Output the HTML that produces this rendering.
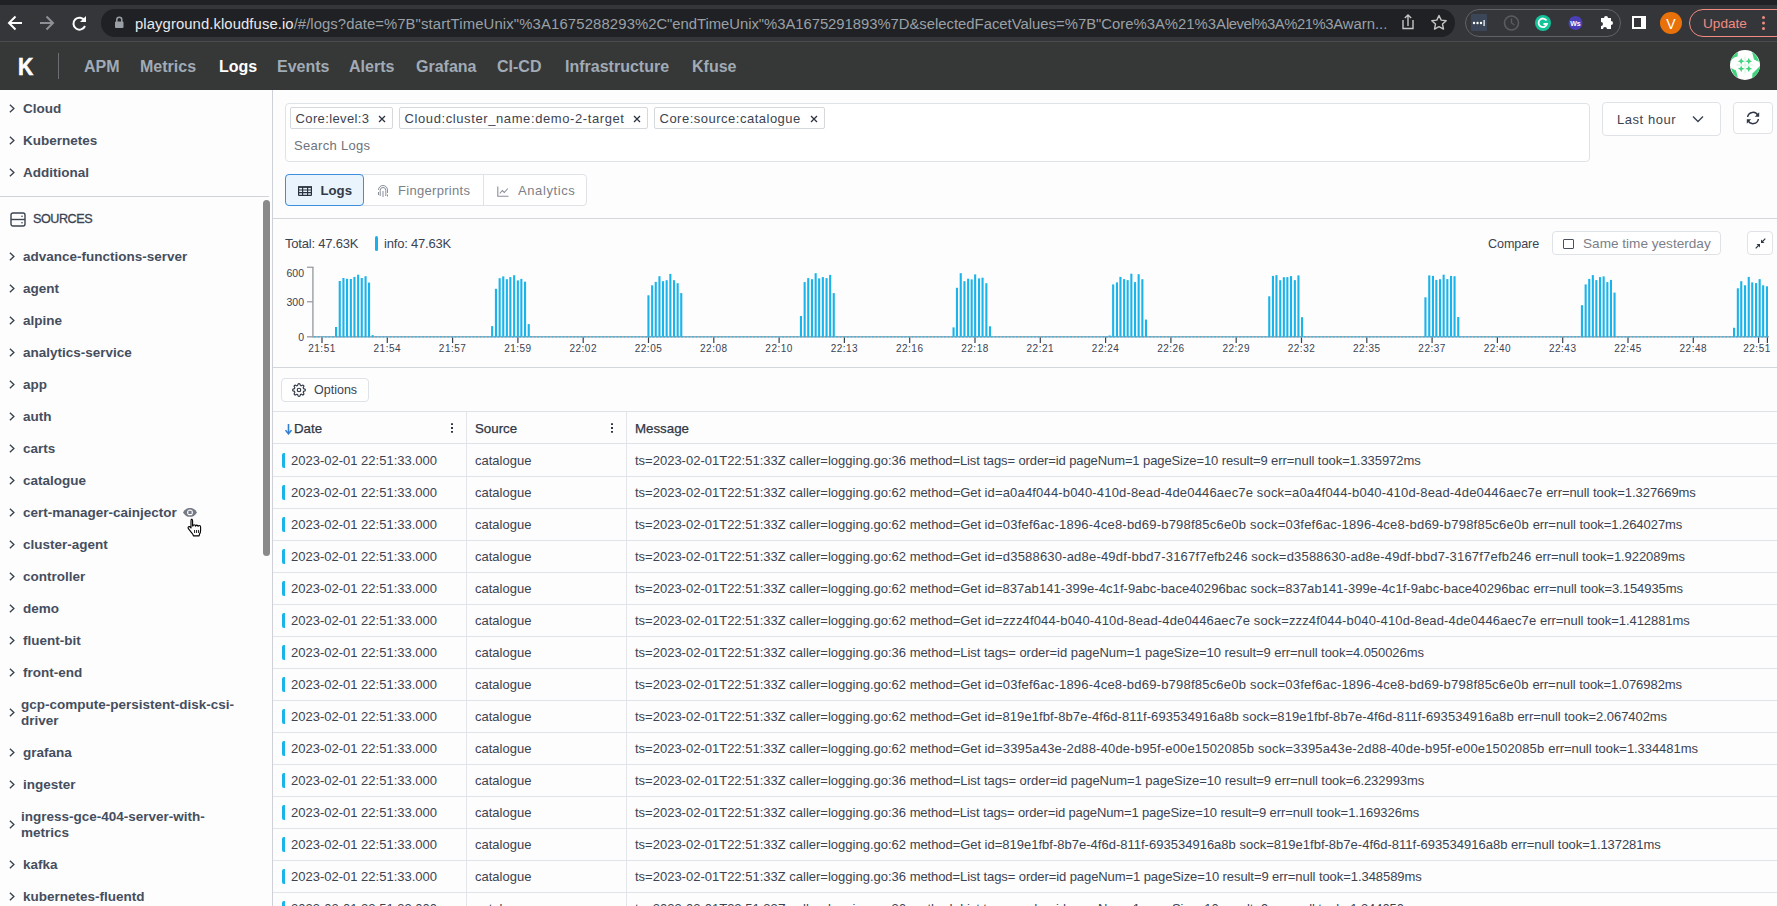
<!DOCTYPE html>
<html><head><meta charset="utf-8">
<style>
*{box-sizing:border-box;margin:0;padding:0}
html,body{width:1777px;height:906px;overflow:hidden;background:#fff;font-family:"Liberation Sans",sans-serif;color:#3c4350}
.abs{position:absolute}
#tabstrip{position:absolute;left:0;top:0;width:1777px;height:5px;background:#202124}
#toolbar{position:absolute;left:0;top:5px;width:1777px;height:36px;background:#35363a}
#tbline{position:absolute;left:0;top:41px;width:1777px;height:1px;background:#4b4c50}
#omni{position:absolute;left:101px;top:9px;width:1354px;height:28px;border-radius:14px;background:#202124}
#url{position:absolute;left:135px;top:15px;width:1254px;overflow:hidden;font-size:14.85px;color:#9aa0a6;white-space:nowrap;line-height:18px}
#url b{color:#e8eaed;font-weight:normal}
#nav{position:absolute;left:0;top:42px;width:1777px;height:48px;background:#363737}
.nv{position:absolute;top:58px;font-size:16px;font-weight:bold;color:#a1abb6;line-height:18px;white-space:nowrap}
#side{position:absolute;left:0;top:90px;width:273px;height:816px;background:#fdfdfd;border-right:1px solid #cdd0d6}
.si{position:absolute;left:23px;font-size:13.5px;font-weight:bold;color:#454e5e;white-space:nowrap;line-height:16px}
.chev{position:absolute;left:9px;width:6px;height:9px}
#main{position:absolute;left:273px;top:90px;width:1504px;height:816px;background:#fdfdfe}
.chip{position:absolute;height:22px;border:1px solid #d5d9de;border-radius:2px;background:#fff}
.chip .cx{position:absolute;right:6px;top:6.5px}
.chip span{position:absolute;left:4.5px;top:3px;font-size:13px;color:#3b4351;line-height:15px;white-space:nowrap;letter-spacing:.38px}
.th{position:absolute;top:10px;font-size:13.3px;color:#2f3744;line-height:15px;-webkit-text-stroke:.25px #2f3744}
.kb{position:absolute;top:12px;width:3px;height:10px;background:linear-gradient(#2f3744 0,#2f3744 2px,transparent 2px,transparent 4px,#2f3744 4px,#2f3744 6px,transparent 6px,transparent 8px,#2f3744 8px,#2f3744 10px);border-radius:1px;width:2.2px}
.row{position:absolute;left:0;width:1504px;height:32px;border-bottom:1px solid #e1e4e8}
.row i{position:absolute;left:9px;top:8px;width:3px;height:15px;border-radius:2px 0 0 2px;background:#1ab4ea}
.row span{position:absolute;top:8px;font-size:13px;line-height:15px;color:#3b4351;white-space:nowrap}
.row b{font-weight:normal}.row .p{letter-spacing:0}.row .u{letter-spacing:.175px}.row .l{letter-spacing:-.09px}
.row .d{left:18px}.row .s{left:202px}.row .m{left:362px;letter-spacing:-.06px}
</style></head><body>
<div id="tabstrip"></div>
<div id="toolbar"></div>
<div id="tbline"></div>
<div id="omni"></div>
<div id="url"><b style="letter-spacing:.08px">playground.kloudfuse.io</b><span style="letter-spacing:.065px">/#/logs?date=%7B"</span><span style="letter-spacing:.146px">startTimeUnix"%3A1675288293</span><span style="letter-spacing:-.04px">%2C"endTimeUnix"%3A1675291893%7D&amp;</span><span>selectedFacetValues=%7B"Core%3A%21%3A</span><span style="letter-spacing:-.45px">level%3A%21%3</span>Awarn...</div>
<svg class="abs" style="left:0;top:5px" width="140" height="36" viewBox="0 5 140 36">
<g fill="none" stroke-width="2" stroke-linecap="butt">
<path d="M22 23H9M15.5 16.5L9 23l6.5 6.5" stroke="#fff"/>
<path d="M40 23h13M46.5 16.5L53 23l-6.5 6.5" stroke="#8d9096"/>
<path d="M84.6 20.5A6 6 0 1 0 85 26" stroke="#fff"/>
</g>
<path d="M86 16v6h-6z" fill="#fff"/>
<rect x="115" y="21.5" width="8.5" height="6.5" rx="1" fill="#9aa0a6"/>
<path d="M116.8 22v-2.2a2.5 2.5 0 0 1 5 0V22" fill="none" stroke="#9aa0a6" stroke-width="1.5"/>
</svg>
<svg class="abs" style="left:1390px;top:5px" width="387" height="36" viewBox="1390 5 387 36">
<g fill="none" stroke="#c4c7c5" stroke-width="1.4">
<path d="M1403 20v8.5h10V20M1408 26V15M1404.8 18l3.2-3 3.2 3"/>
<path d="M1439 15.5l2.2 4.6 5 .6-3.7 3.4 1 5-4.5-2.5-4.5 2.5 1-5-3.7-3.4 5-.6z" stroke-linejoin="round"/>
</g>
<rect x="1465.5" y="9.5" width="155" height="27" rx="13.5" fill="none" stroke="#5f6368"/>
<rect x="1471" y="14" width="16" height="17" rx="1" fill="#3b4759"/>
<g fill="#fff"><circle cx="1474" cy="23" r="1.2"/><circle cx="1477.5" cy="23" r="1.2"/><circle cx="1481" cy="23" r="1.2"/><rect x="1483.5" y="20" width="1.2" height="6"/></g>
<circle cx="1511.5" cy="23" r="7" fill="none" stroke="#5a5c60" stroke-width="1.6"/>
<path d="M1511.5 18.5v4.5l3 2" fill="none" stroke="#5a5c60" stroke-width="1.4"/>
<circle cx="1543" cy="23" r="8" fill="#15c39a"/>
<path d="M1546.5 20.5a4.3 4.3 0 1 0 .5 3.5h-3.5" fill="none" stroke="#fff" stroke-width="1.8"/>
<circle cx="1575.5" cy="23" r="7" fill="#4a3fb8"/>
<text x="1575.5" y="25.5" font-size="7" font-weight="bold" fill="#fff" text-anchor="middle" font-family="Liberation Sans">Ws</text>
<path d="M1601 18h3a2 2 0 0 1 4 0h3v3a2 2 0 0 1 0 4v4h-4a2 2 0 0 0-4 0h-2v-3a2 2 0 0 0 0-4z" fill="#fff"/>
<rect x="1632" y="16" width="14" height="13" fill="#fff"/>
<rect x="1634" y="18" width="7" height="9" fill="#35363a"/>
<circle cx="1671" cy="23" r="11" fill="#e8710a"/>
<text x="1671" y="28.5" font-size="14" fill="#fff" text-anchor="middle" font-family="Liberation Sans">V</text>
<rect x="1689.5" y="9.5" width="100" height="27" rx="13.5" fill="none" stroke="#f28b82"/>
<text x="1703" y="28" font-size="13.6" fill="#f28b82" font-family="Liberation Sans">Update</text>
<g fill="#f28b82"><circle cx="1763.5" cy="17.5" r="1.5"/><circle cx="1763.5" cy="23" r="1.5"/><circle cx="1763.5" cy="28.5" r="1.5"/></g>
</svg>
<div id="nav"></div>
<div class="abs" style="left:18px;top:53.5px;font-size:23.5px;font-weight:bold;color:#fff;line-height:26px;-webkit-text-stroke:.6px #fff;transform:scaleX(.9);transform-origin:0 0">K</div>
<div class="abs" style="left:58px;top:53px;width:1px;height:26px;background:#6b6e72"></div>
<div class="nv" style="left:84px">APM</div>
<div class="nv" style="left:140px">Metrics</div>
<div class="nv" style="left:219px;color:#fff">Logs</div>
<div class="nv" style="left:277px">Events</div>
<div class="nv" style="left:349px">Alerts</div>
<div class="nv" style="left:416px">Grafana</div>
<div class="nv" style="left:497px">CI-CD</div>
<div class="nv" style="left:565px">Infrastructure</div>
<div class="nv" style="left:692px">Kfuse</div>
<div id="side">
<div class="abs" style="left:0;top:106px;width:269px;height:1px;background:#d0d3d9"></div>
<svg class="abs" style="left:10px;top:122px" width="16" height="15" viewBox="0 0 16 15"><rect x="1" y="1" width="14" height="13" rx="2" fill="none" stroke="#3a4352" stroke-width="1.4"/><path d="M1 7.5h14" stroke="#3a4352" stroke-width="1.4"/><circle cx="12" cy="4.3" r=".8" fill="#3a4352"/><circle cx="12" cy="10.7" r=".8" fill="#3a4352"/></svg>
<div class="abs" style="left:33px;top:122px;font-size:12.6px;color:#3a4352;letter-spacing:-.45px;line-height:15px;-webkit-text-stroke:.3px #3a4352">SOURCES</div>
<div class="abs" style="left:263px;top:110px;width:7px;height:356px;border-radius:4px;background:#8a8a8a"></div>
<svg class="chev" style="top:13.5px" width="6" height="9" viewBox="0 0 6 9"><path d="M.9 .7l4 3.8-4 3.8" fill="none" stroke="#3a4352" stroke-width="1.35"/></svg>
<div class="si" style="top:11px">Cloud</div>
<svg class="chev" style="top:45.5px" width="6" height="9" viewBox="0 0 6 9"><path d="M.9 .7l4 3.8-4 3.8" fill="none" stroke="#3a4352" stroke-width="1.35"/></svg>
<div class="si" style="top:43px">Kubernetes</div>
<svg class="chev" style="top:77.5px" width="6" height="9" viewBox="0 0 6 9"><path d="M.9 .7l4 3.8-4 3.8" fill="none" stroke="#3a4352" stroke-width="1.35"/></svg>
<div class="si" style="top:75px">Additional</div>
<svg class="chev" style="top:161.5px" width="6" height="9" viewBox="0 0 6 9"><path d="M.9 .7l4 3.8-4 3.8" fill="none" stroke="#3a4352" stroke-width="1.35"/></svg>
<div class="si" style="top:159px">advance-functions-server</div>
<svg class="chev" style="top:193.5px" width="6" height="9" viewBox="0 0 6 9"><path d="M.9 .7l4 3.8-4 3.8" fill="none" stroke="#3a4352" stroke-width="1.35"/></svg>
<div class="si" style="top:191px">agent</div>
<svg class="chev" style="top:225.5px" width="6" height="9" viewBox="0 0 6 9"><path d="M.9 .7l4 3.8-4 3.8" fill="none" stroke="#3a4352" stroke-width="1.35"/></svg>
<div class="si" style="top:223px">alpine</div>
<svg class="chev" style="top:257.5px" width="6" height="9" viewBox="0 0 6 9"><path d="M.9 .7l4 3.8-4 3.8" fill="none" stroke="#3a4352" stroke-width="1.35"/></svg>
<div class="si" style="top:255px">analytics-service</div>
<svg class="chev" style="top:289.5px" width="6" height="9" viewBox="0 0 6 9"><path d="M.9 .7l4 3.8-4 3.8" fill="none" stroke="#3a4352" stroke-width="1.35"/></svg>
<div class="si" style="top:287px">app</div>
<svg class="chev" style="top:321.5px" width="6" height="9" viewBox="0 0 6 9"><path d="M.9 .7l4 3.8-4 3.8" fill="none" stroke="#3a4352" stroke-width="1.35"/></svg>
<div class="si" style="top:319px">auth</div>
<svg class="chev" style="top:353.5px" width="6" height="9" viewBox="0 0 6 9"><path d="M.9 .7l4 3.8-4 3.8" fill="none" stroke="#3a4352" stroke-width="1.35"/></svg>
<div class="si" style="top:351px">carts</div>
<svg class="chev" style="top:385.5px" width="6" height="9" viewBox="0 0 6 9"><path d="M.9 .7l4 3.8-4 3.8" fill="none" stroke="#3a4352" stroke-width="1.35"/></svg>
<div class="si" style="top:383px">catalogue</div>
<svg class="chev" style="top:417.5px" width="6" height="9" viewBox="0 0 6 9"><path d="M.9 .7l4 3.8-4 3.8" fill="none" stroke="#3a4352" stroke-width="1.35"/></svg>
<div class="si" style="top:415px">cert-manager-cainjector</div>
<svg class="chev" style="top:449.5px" width="6" height="9" viewBox="0 0 6 9"><path d="M.9 .7l4 3.8-4 3.8" fill="none" stroke="#3a4352" stroke-width="1.35"/></svg>
<div class="si" style="top:447px">cluster-agent</div>
<svg class="chev" style="top:481.5px" width="6" height="9" viewBox="0 0 6 9"><path d="M.9 .7l4 3.8-4 3.8" fill="none" stroke="#3a4352" stroke-width="1.35"/></svg>
<div class="si" style="top:479px">controller</div>
<svg class="chev" style="top:513.5px" width="6" height="9" viewBox="0 0 6 9"><path d="M.9 .7l4 3.8-4 3.8" fill="none" stroke="#3a4352" stroke-width="1.35"/></svg>
<div class="si" style="top:511px">demo</div>
<svg class="chev" style="top:545.5px" width="6" height="9" viewBox="0 0 6 9"><path d="M.9 .7l4 3.8-4 3.8" fill="none" stroke="#3a4352" stroke-width="1.35"/></svg>
<div class="si" style="top:543px">fluent-bit</div>
<svg class="chev" style="top:577.5px" width="6" height="9" viewBox="0 0 6 9"><path d="M.9 .7l4 3.8-4 3.8" fill="none" stroke="#3a4352" stroke-width="1.35"/></svg>
<div class="si" style="top:575px">front-end</div>
<svg class="chev" style="top:617.5px" width="6" height="9" viewBox="0 0 6 9"><path d="M.9 .7l4 3.8-4 3.8" fill="none" stroke="#3a4352" stroke-width="1.35"/></svg>
<div class="si" style="top:607px;left:21px">gcp-compute-persistent-disk-csi-<br>driver</div>
<svg class="chev" style="top:657.5px" width="6" height="9" viewBox="0 0 6 9"><path d="M.9 .7l4 3.8-4 3.8" fill="none" stroke="#3a4352" stroke-width="1.35"/></svg>
<div class="si" style="top:655px">grafana</div>
<svg class="chev" style="top:689.5px" width="6" height="9" viewBox="0 0 6 9"><path d="M.9 .7l4 3.8-4 3.8" fill="none" stroke="#3a4352" stroke-width="1.35"/></svg>
<div class="si" style="top:687px">ingester</div>
<svg class="chev" style="top:729.5px" width="6" height="9" viewBox="0 0 6 9"><path d="M.9 .7l4 3.8-4 3.8" fill="none" stroke="#3a4352" stroke-width="1.35"/></svg>
<div class="si" style="top:719px;left:21px">ingress-gce-404-server-with-<br>metrics</div>
<svg class="chev" style="top:769.5px" width="6" height="9" viewBox="0 0 6 9"><path d="M.9 .7l4 3.8-4 3.8" fill="none" stroke="#3a4352" stroke-width="1.35"/></svg>
<div class="si" style="top:767px">kafka</div>
<svg class="chev" style="top:801.5px" width="6" height="9" viewBox="0 0 6 9"><path d="M.9 .7l4 3.8-4 3.8" fill="none" stroke="#3a4352" stroke-width="1.35"/></svg>
<div class="si" style="top:799px">kubernetes-fluentd</div>
<svg class="abs" style="left:182px;top:416px" width="16" height="12" viewBox="0 0 16 12"><path d="M1 6.4C3 3.2 5.2 2 8 2s5 1.2 7 4.4c-2 3.2-4.2 4.4-7 4.4S3 9.6 1 6.4z" fill="#747a86"/><circle cx="8" cy="6.4" r="2.9" fill="#fff"/><rect x="6.4" y="4.8" width="3.2" height="3.2" fill="#747a86"/></svg>
</div>
<div id="main">
<!-- search box -->
<div class="abs" style="left:12px;top:13px;width:1305px;height:59px;border:1px solid #dfe2e6;border-radius:4px;background:#fff"></div>
<div class="chip" style="left:17px;top:17px;width:103px"><span>Core:level:3</span><svg class="cx" width="8" height="8" viewBox="0 0 8 8"><path d="M1 1l6 6M7 1L1 7" stroke="#2a3240" stroke-width="1.25"/></svg></div>
<div class="chip" style="left:126px;top:17px;width:249px"><span style="letter-spacing:.6px">Cloud:cluster_name:demo-2-target</span><svg class="cx" width="8" height="8" viewBox="0 0 8 8"><path d="M1 1l6 6M7 1L1 7" stroke="#2a3240" stroke-width="1.25"/></svg></div>
<div class="chip" style="left:381px;top:17px;width:171px"><span style="letter-spacing:.5px">Core:source:catalogue</span><svg class="cx" width="8" height="8" viewBox="0 0 8 8"><path d="M1 1l6 6M7 1L1 7" stroke="#2a3240" stroke-width="1.25"/></svg></div>
<div class="abs" style="left:21px;top:48px;font-size:13px;letter-spacing:.3px;color:#6f737b;line-height:15px">Search Logs</div>
<!-- last hour -->
<div class="abs" style="left:1329px;top:12px;width:119px;height:34px;border:1px solid #dfe2e6;border-radius:4px;background:#fff"></div>
<div class="abs" style="left:1344px;top:22px;font-size:13px;letter-spacing:.55px;color:#3b4351;line-height:15px">Last hour</div>
<svg class="abs" style="left:1419px;top:25px" width="12" height="8" viewBox="0 0 12 8"><path d="M1 1.5l5 5 5-5" fill="none" stroke="#3b4351" stroke-width="1.4"/></svg>
<div class="abs" style="left:1460px;top:12px;width:40px;height:32px;border:1px solid #dfe2e6;border-radius:4px;background:#fff"></div>
<svg class="abs" style="left:1472px;top:21px" width="16" height="14" viewBox="0 0 16 14"><g fill="none" stroke="#2f3744" stroke-width="1.5"><path d="M2.6 6A5.5 5.5 0 0 1 13 4.5"/><path d="M13.4 8A5.5 5.5 0 0 1 3 9.5"/></g><path d="M14.2 1.2v4.6H9.8z" fill="#2f3744"/><path d="M1.8 12.8V8.2h4.4z" fill="#2f3744"/></svg>
<!-- tabs -->
<div class="abs" style="left:12px;top:84px;width:302px;height:32px;border:1px solid #dfe2e6;border-radius:4px;background:#fff"></div>
<div class="abs" style="left:12px;top:84px;width:79px;height:32px;border:1.3px solid #3d8ede;border-radius:4px;background:#e9f4fc"></div>
<div class="abs" style="left:210px;top:85px;width:1px;height:30px;background:#dfe2e6"></div>
<svg class="abs" style="left:25px;top:96px" width="14" height="10" viewBox="0 0 14 10"><g fill="none" stroke="#2a3240" stroke-width="1.2"><rect x=".6" y="1" width="12.8" height="8.4" rx=".5"/><path d="M.6 4h12.8M.6 6.7h12.8M4.6 1v8.4M9.6 1v8.4"/></g><rect x="0" y=".2" width="14" height="1.6" fill="#2a3240"/></svg>
<div class="abs" style="left:47.5px;top:93px;font-size:13.2px;font-weight:bold;color:#323a47;line-height:15px">Logs</div>
<svg class="abs" style="left:104px;top:94px" width="12" height="14" viewBox="0 0 12 14"><g fill="none" stroke="#8a8f98" stroke-width="1"><path d="M1.5 6a4.5 4.5 0 0 1 9 0v3"/><path d="M3.2 12V6.3a2.8 2.8 0 0 1 5.6 0V12"/><path d="M6 7v6M1.5 8v3M10.5 10.5v2"/></g></svg>
<div class="abs" style="left:125px;top:93px;font-size:13px;letter-spacing:.3px;color:#7b8089;line-height:15px">Fingerprints</div>
<svg class="abs" style="left:224px;top:96px" width="12" height="11" viewBox="0 0 12 11"><path d="M.8 .5v9.7h10.7" fill="none" stroke="#8a8f98" stroke-width="1.1"/><path d="M2.8 7.5l2.5-3 2 2 3.5-4" fill="none" stroke="#8a8f98" stroke-width="1.1"/></svg>
<div class="abs" style="left:245px;top:93px;font-size:13px;letter-spacing:.6px;color:#7b8089;line-height:15px">Analytics</div>
<div class="abs" style="left:0;top:128px;width:1504px;height:1px;background:#d3d6db"></div>
<!-- chart header -->
<div class="abs" style="left:12px;top:146px;font-size:13px;letter-spacing:-.2px;color:#3b4351;line-height:16px">Total: 47.63K</div>
<div class="abs" style="left:102px;top:146px;width:3px;height:15px;border-radius:2px;background:#1ab1e8"></div>
<div class="abs" style="left:111px;top:146px;font-size:13px;letter-spacing:-.2px;color:#3b4351;line-height:16px">info: 47.63K</div>
<div class="abs" style="left:1215px;top:147px;font-size:12.6px;letter-spacing:-.1px;color:#3b4351;line-height:15px">Compare</div>
<div class="abs" style="left:1279px;top:141px;width:169px;height:24px;border:1px solid #dfe2e6;border-radius:4px;background:#fff"></div>
<div class="abs" style="left:1290px;top:149px;width:11px;height:10px;border:1.5px solid #4a505c;border-radius:1px"></div>
<div class="abs" style="left:1310px;top:146px;font-size:13.6px;color:#7c8089;line-height:15px">Same time yesterday</div>
<div class="abs" style="left:1474px;top:141px;width:26px;height:24px;border:1px solid #dfe2e6;border-radius:4px;background:#fff"></div>
<svg class="abs" style="left:1482px;top:148px" width="11" height="11" viewBox="0 0 11 11"><g fill="none" stroke="#2f3744" stroke-width="1.2"><path d="M10.3 .7L6.5 4.5M.7 10.3L4.5 6.5"/></g><path d="M6 1.5v3.5h3.5zM5 9.5V6H1.5z" fill="#2f3744"/></svg>
<!-- chart -->
<svg id="chart" class="abs" style="left:0;top:170px" width="1504" height="200" viewBox="273 260 1504 200"><g fill="#9b9ea3">
<rect x="312.2" y="267" width="1.4" height="70.5"/>
<rect x="307" y="266.6" width="6.5" height="1.3"/>
<rect x="307" y="301.1" width="6" height="1.3"/>
<rect x="307" y="336.1" width="1462" height="1.4"/>
</g><g fill="#3a404a">
<rect x="321.4" y="337.4" width="1.2" height="5.6"/>
<rect x="386.7" y="337.4" width="1.2" height="5.6"/>
<rect x="452.0" y="337.4" width="1.2" height="5.6"/>
<rect x="517.3" y="337.4" width="1.2" height="5.6"/>
<rect x="582.6" y="337.4" width="1.2" height="5.6"/>
<rect x="647.9" y="337.4" width="1.2" height="5.6"/>
<rect x="713.2" y="337.4" width="1.2" height="5.6"/>
<rect x="778.5" y="337.4" width="1.2" height="5.6"/>
<rect x="843.8" y="337.4" width="1.2" height="5.6"/>
<rect x="909.1" y="337.4" width="1.2" height="5.6"/>
<rect x="974.4" y="337.4" width="1.2" height="5.6"/>
<rect x="1039.7" y="337.4" width="1.2" height="5.6"/>
<rect x="1105.0" y="337.4" width="1.2" height="5.6"/>
<rect x="1170.3" y="337.4" width="1.2" height="5.6"/>
<rect x="1235.6" y="337.4" width="1.2" height="5.6"/>
<rect x="1300.9" y="337.4" width="1.2" height="5.6"/>
<rect x="1366.2" y="337.4" width="1.2" height="5.6"/>
<rect x="1431.5" y="337.4" width="1.2" height="5.6"/>
<rect x="1496.8" y="337.4" width="1.2" height="5.6"/>
<rect x="1562.1" y="337.4" width="1.2" height="5.6"/>
<rect x="1627.4" y="337.4" width="1.2" height="5.6"/>
<rect x="1692.7" y="337.4" width="1.2" height="5.6"/>
<rect x="1758.0" y="337.4" width="1.2" height="5.6"/>
<rect x="1766.8" y="337.4" width="1.2" height="5.6"/>
</g>
<line x1="314" y1="336.8" x2="1768" y2="336.8" stroke="#3cb8e6" stroke-width="1.3" stroke-dasharray="2 1.6"/>
<g fill="#1ab4ea">
<rect x="335.0" y="327.0" width="2.1" height="9.7"/>
<rect x="338.7" y="281.0" width="2.1" height="55.7"/>
<rect x="342.4" y="278.0" width="2.1" height="58.7"/>
<rect x="346.0" y="278.8" width="2.1" height="57.9"/>
<rect x="349.8" y="279.0" width="2.1" height="57.7"/>
<rect x="353.4" y="276.9" width="2.1" height="59.8"/>
<rect x="357.1" y="274.7" width="2.1" height="62.0"/>
<rect x="360.7" y="278.0" width="2.1" height="58.7"/>
<rect x="364.5" y="276.2" width="2.1" height="60.5"/>
<rect x="368.0" y="282.6" width="2.1" height="54.1"/>
<rect x="371.6" y="335.1" width="2.1" height="1.6"/>
<rect x="491.1" y="326.1" width="2.1" height="10.6"/>
<rect x="494.9" y="288.8" width="2.1" height="47.9"/>
<rect x="498.6" y="278.2" width="2.1" height="58.5"/>
<rect x="502.2" y="276.4" width="2.1" height="60.3"/>
<rect x="505.8" y="279.2" width="2.1" height="57.5"/>
<rect x="509.3" y="277.1" width="2.1" height="59.6"/>
<rect x="513.1" y="275.2" width="2.1" height="61.5"/>
<rect x="516.8" y="280.4" width="2.1" height="56.3"/>
<rect x="520.3" y="278.9" width="2.1" height="57.8"/>
<rect x="524.0" y="281.7" width="2.1" height="55.0"/>
<rect x="527.7" y="324.1" width="2.1" height="12.6"/>
<rect x="647.4" y="295.3" width="2.1" height="41.4"/>
<rect x="651.1" y="285.3" width="2.1" height="51.4"/>
<rect x="654.7" y="281.9" width="2.1" height="54.8"/>
<rect x="658.4" y="276.2" width="2.1" height="60.5"/>
<rect x="662.0" y="281.2" width="2.1" height="55.5"/>
<rect x="665.6" y="280.2" width="2.1" height="56.5"/>
<rect x="669.3" y="273.9" width="2.1" height="62.8"/>
<rect x="673.0" y="280.2" width="2.1" height="56.5"/>
<rect x="676.6" y="283.2" width="2.1" height="53.5"/>
<rect x="680.2" y="293.1" width="2.1" height="43.6"/>
<rect x="799.9" y="316.0" width="2.1" height="20.7"/>
<rect x="803.6" y="282.1" width="2.1" height="54.6"/>
<rect x="807.2" y="278.1" width="2.1" height="58.6"/>
<rect x="810.9" y="279.2" width="2.1" height="57.5"/>
<rect x="814.6" y="273.2" width="2.1" height="63.5"/>
<rect x="818.1" y="278.4" width="2.1" height="58.3"/>
<rect x="821.8" y="277.1" width="2.1" height="59.6"/>
<rect x="825.5" y="278.1" width="2.1" height="58.6"/>
<rect x="829.1" y="274.9" width="2.1" height="61.8"/>
<rect x="832.7" y="293.1" width="2.1" height="43.6"/>
<rect x="952.5" y="327.4" width="2.1" height="9.3"/>
<rect x="955.9" y="287.8" width="2.1" height="48.9"/>
<rect x="959.7" y="273.2" width="2.1" height="63.5"/>
<rect x="963.4" y="281.2" width="2.1" height="55.5"/>
<rect x="967.1" y="278.7" width="2.1" height="58.0"/>
<rect x="970.6" y="279.4" width="2.1" height="57.3"/>
<rect x="974.1" y="274.4" width="2.1" height="62.3"/>
<rect x="978.0" y="278.4" width="2.1" height="58.3"/>
<rect x="981.5" y="277.7" width="2.1" height="59.0"/>
<rect x="985.3" y="283.2" width="2.1" height="53.5"/>
<rect x="988.9" y="326.3" width="2.1" height="10.4"/>
<rect x="1108.5" y="335.5" width="2.1" height="1.2"/>
<rect x="1112.1" y="284.4" width="2.1" height="52.3"/>
<rect x="1115.9" y="282.4" width="2.1" height="54.3"/>
<rect x="1119.4" y="276.9" width="2.1" height="59.8"/>
<rect x="1123.1" y="279.1" width="2.1" height="57.6"/>
<rect x="1126.6" y="280.1" width="2.1" height="56.6"/>
<rect x="1130.3" y="273.7" width="2.1" height="63.0"/>
<rect x="1134.0" y="282.1" width="2.1" height="54.6"/>
<rect x="1137.6" y="274.2" width="2.1" height="62.5"/>
<rect x="1141.3" y="279.2" width="2.1" height="57.5"/>
<rect x="1144.9" y="319.6" width="2.1" height="17.1"/>
<rect x="1268.2" y="296.3" width="2.1" height="40.4"/>
<rect x="1271.9" y="275.9" width="2.1" height="60.8"/>
<rect x="1275.4" y="275.1" width="2.1" height="61.6"/>
<rect x="1279.2" y="280.2" width="2.1" height="56.5"/>
<rect x="1282.8" y="277.2" width="2.1" height="59.5"/>
<rect x="1286.3" y="277.1" width="2.1" height="59.6"/>
<rect x="1290.0" y="276.1" width="2.1" height="60.6"/>
<rect x="1293.8" y="280.1" width="2.1" height="56.6"/>
<rect x="1297.4" y="275.4" width="2.1" height="61.3"/>
<rect x="1301.0" y="317.2" width="2.1" height="19.5"/>
<rect x="1424.4" y="297.3" width="2.1" height="39.4"/>
<rect x="1428.2" y="275.4" width="2.1" height="61.3"/>
<rect x="1431.9" y="275.9" width="2.1" height="60.8"/>
<rect x="1435.3" y="279.9" width="2.1" height="56.8"/>
<rect x="1439.0" y="279.2" width="2.1" height="57.5"/>
<rect x="1442.6" y="274.7" width="2.1" height="62.0"/>
<rect x="1446.3" y="279.1" width="2.1" height="57.6"/>
<rect x="1450.0" y="275.9" width="2.1" height="60.8"/>
<rect x="1453.5" y="276.2" width="2.1" height="60.5"/>
<rect x="1457.2" y="317.0" width="2.1" height="19.7"/>
<rect x="1580.9" y="305.2" width="2.1" height="31.5"/>
<rect x="1584.6" y="284.4" width="2.1" height="52.3"/>
<rect x="1588.2" y="278.9" width="2.1" height="57.8"/>
<rect x="1591.8" y="275.1" width="2.1" height="61.6"/>
<rect x="1595.3" y="280.1" width="2.1" height="56.6"/>
<rect x="1599.0" y="277.1" width="2.1" height="59.6"/>
<rect x="1602.6" y="276.4" width="2.1" height="60.3"/>
<rect x="1606.3" y="282.1" width="2.1" height="54.6"/>
<rect x="1609.9" y="279.9" width="2.1" height="56.8"/>
<rect x="1613.5" y="292.6" width="2.1" height="44.1"/>
<rect x="1733.0" y="327.8" width="2.1" height="8.9"/>
<rect x="1736.8" y="288.3" width="2.1" height="48.4"/>
<rect x="1740.2" y="281.2" width="2.1" height="55.5"/>
<rect x="1744.0" y="285.3" width="2.1" height="51.4"/>
<rect x="1747.7" y="276.9" width="2.1" height="59.8"/>
<rect x="1751.2" y="282.4" width="2.1" height="54.3"/>
<rect x="1755.0" y="283.1" width="2.1" height="53.6"/>
<rect x="1758.6" y="279.1" width="2.1" height="57.6"/>
<rect x="1762.1" y="285.3" width="2.1" height="51.4"/>
<rect x="1765.9" y="286.3" width="2.1" height="50.4"/>
</g>
<g font-family="Liberation Sans" font-size="10.5" fill="#3b4351" text-anchor="end">
<text x="304" y="277">600</text><text x="304" y="306">300</text><text x="304" y="341">0</text>
</g>
<g font-family="Liberation Sans" font-size="10" fill="#3b4351" text-anchor="middle" letter-spacing=".5">
<text x="322.0" y="352">21:51</text>
<text x="387.3" y="352">21:54</text>
<text x="452.6" y="352">21:57</text>
<text x="517.9" y="352">21:59</text>
<text x="583.2" y="352">22:02</text>
<text x="648.5" y="352">22:05</text>
<text x="713.8" y="352">22:08</text>
<text x="779.1" y="352">22:10</text>
<text x="844.4" y="352">22:13</text>
<text x="909.7" y="352">22:16</text>
<text x="975.0" y="352">22:18</text>
<text x="1040.3" y="352">22:21</text>
<text x="1105.6" y="352">22:24</text>
<text x="1170.9" y="352">22:26</text>
<text x="1236.2" y="352">22:29</text>
<text x="1301.5" y="352">22:32</text>
<text x="1366.8" y="352">22:35</text>
<text x="1432.1" y="352">22:37</text>
<text x="1497.4" y="352">22:40</text>
<text x="1562.7" y="352">22:43</text>
<text x="1628.0" y="352">22:45</text>
<text x="1693.3" y="352">22:48</text>
<text x="1757.0" y="352">22:51</text>
</g></svg>
<div class="abs" style="left:0;top:277px;width:1504px;height:1px;background:#d3d6db"></div>
<!-- options -->
<div class="abs" style="left:8px;top:288px;width:88px;height:24px;border:1px solid #dfe2e6;border-radius:4px;background:#fff"></div>
<svg class="abs" style="left:19px;top:293px" width="14" height="14" viewBox="0 0 24 24"><path fill="none" stroke="#2f3744" stroke-width="2" d="M12 15a3 3 0 1 0 0-6 3 3 0 0 0 0 6z"/><path fill="none" stroke="#2f3744" stroke-width="2" d="M19.4 15a1.65 1.65 0 0 0 .33 1.82l.06.06a2 2 0 1 1-2.83 2.83l-.06-.06a1.65 1.65 0 0 0-1.82-.33 1.65 1.65 0 0 0-1 1.51V21a2 2 0 1 1-4 0v-.09A1.65 1.65 0 0 0 9 19.4a1.65 1.65 0 0 0-1.82.33l-.06.06a2 2 0 1 1-2.83-2.83l.06-.06A1.65 1.65 0 0 0 4.68 15a1.65 1.65 0 0 0-1.51-1H3a2 2 0 1 1 0-4h.09A1.65 1.65 0 0 0 4.6 9a1.65 1.65 0 0 0-.33-1.82l-.06-.06a2 2 0 1 1 2.83-2.830l.06.06A1.65 1.65 0 0 0 9 4.68a1.65 1.65 0 0 0 1-1.51V3a2 2 0 1 1 4 0v.09a1.65 1.65 0 0 0 1 1.51 1.65 1.65 0 0 0 1.82-.33l.06-.06a2 2 0 1 1 2.83 2.83l-.06.06A1.65 1.65 0 0 0 19.4 9a1.65 1.65 0 0 0 1.51 1H21a2 2 0 1 1 0 4h-.09a1.65 1.65 0 0 0-1.51 1z"/></svg>
<div class="abs" style="left:41px;top:293px;font-size:12.5px;color:#3b4351;line-height:15px">Options</div>
<!-- table -->
<div id="tbl" class="abs" style="left:0;top:321px;width:1504px;height:495px"><div class="abs" style="left:0;top:0;width:1504px;height:1px;background:#dfe2e6"></div>
<div class="abs" style="left:193px;top:1px;width:1px;height:494px;background:#e3e5e9"></div>
<div class="abs" style="left:353px;top:1px;width:1px;height:494px;background:#e3e5e9"></div>
<div class="abs" style="left:0;top:32px;width:1504px;height:1px;background:#dfe2e6"></div>
<svg class="abs" style="left:12px;top:13px" width="7" height="11" viewBox="0 0 7 11"><path d="M3.5 0v9" stroke="#2f7fd4" stroke-width="1.6"/><path d="M.5 6.2l3 3.6 3-3.6" fill="none" stroke="#2f7fd4" stroke-width="1.6"/></svg>
<div class="th" style="left:21px">Date</div>
<div class="kb" style="left:178px"></div>
<div class="th" style="left:202px">Source</div>
<div class="kb" style="left:338px"></div>
<div class="th" style="left:362px">Message</div>
<div class="row" style="top:34px"><i></i><span class="d">2023-02-01 22:51:33.000</span><span class="s">catalogue</span><span class="m"><b class="p">ts=2023-02-01T22:51:33Z caller=logging.go:36 </b><b class="l" style="letter-spacing:-0.099px">method=List tags= order=id pageNum=1 pageSize=10 result=9 </b>err=null took=1.335972ms</span></div>
<div class="row" style="top:66px"><i></i><span class="d">2023-02-01 22:51:33.000</span><span class="s">catalogue</span><span class="m"><b class="p">ts=2023-02-01T22:51:33Z caller=logging.go:62 </b>method=Get <b class="u" style="letter-spacing:0.168px">id=a0a4f044-b040-410d-8ead-4de0446aec7e sock=a0a4f044-b040-410d-8ead-4de0446aec7e </b>err=null took=1.327669ms</span></div>
<div class="row" style="top:98px"><i></i><span class="d">2023-02-01 22:51:33.000</span><span class="s">catalogue</span><span class="m"><b class="p">ts=2023-02-01T22:51:33Z caller=logging.go:62 </b>method=Get <b class="u" style="letter-spacing:0.215px">id=03fef6ac-1896-4ce8-bd69-b798f85c6e0b sock=03fef6ac-1896-4ce8-bd69-b798f85c6e0b </b>err=null took=1.264027ms</span></div>
<div class="row" style="top:130px"><i></i><span class="d">2023-02-01 22:51:33.000</span><span class="s">catalogue</span><span class="m"><b class="p">ts=2023-02-01T22:51:33Z caller=logging.go:62 </b>method=Get <b class="u" style="letter-spacing:0.193px">id=d3588630-ad8e-49df-bbd7-3167f7efb246 sock=d3588630-ad8e-49df-bbd7-3167f7efb246 </b>err=null took=1.922089ms</span></div>
<div class="row" style="top:162px"><i></i><span class="d">2023-02-01 22:51:33.000</span><span class="s">catalogue</span><span class="m"><b class="p">ts=2023-02-01T22:51:33Z caller=logging.go:62 </b>method=Get <b class="u" style="letter-spacing:0.065px">id=837ab141-399e-4c1f-9abc-bace40296bac sock=837ab141-399e-4c1f-9abc-bace40296bac </b>err=null took=3.154935ms</span></div>
<div class="row" style="top:194px"><i></i><span class="d">2023-02-01 22:51:33.000</span><span class="s">catalogue</span><span class="m"><b class="p">ts=2023-02-01T22:51:33Z caller=logging.go:62 </b>method=Get <b class="u" style="letter-spacing:0.147px">id=zzz4f044-b040-410d-8ead-4de0446aec7e sock=zzz4f044-b040-410d-8ead-4de0446aec7e </b>err=null took=1.412881ms</span></div>
<div class="row" style="top:226px"><i></i><span class="d">2023-02-01 22:51:33.000</span><span class="s">catalogue</span><span class="m"><b class="p">ts=2023-02-01T22:51:33Z caller=logging.go:36 </b><b class="l" style="letter-spacing:-0.043px">method=List tags= order=id pageNum=1 pageSize=10 result=9 </b>err=null took=4.050026ms</span></div>
<div class="row" style="top:258px"><i></i><span class="d">2023-02-01 22:51:33.000</span><span class="s">catalogue</span><span class="m"><b class="p">ts=2023-02-01T22:51:33Z caller=logging.go:62 </b>method=Get <b class="u" style="letter-spacing:0.212px">id=03fef6ac-1896-4ce8-bd69-b798f85c6e0b sock=03fef6ac-1896-4ce8-bd69-b798f85c6e0b </b>err=null took=1.076982ms</span></div>
<div class="row" style="top:290px"><i></i><span class="d">2023-02-01 22:51:33.000</span><span class="s">catalogue</span><span class="m"><b class="p">ts=2023-02-01T22:51:33Z caller=logging.go:62 </b>method=Get <b class="u" style="letter-spacing:0.088px">id=819e1fbf-8b7e-4f6d-811f-693534916a8b sock=819e1fbf-8b7e-4f6d-811f-693534916a8b </b>err=null took=2.067402ms</span></div>
<div class="row" style="top:322px"><i></i><span class="d">2023-02-01 22:51:33.000</span><span class="s">catalogue</span><span class="m"><b class="p">ts=2023-02-01T22:51:33Z caller=logging.go:62 </b>method=Get <b class="u" style="letter-spacing:0.175px">id=3395a43e-2d88-40de-b95f-e00e1502085b sock=3395a43e-2d88-40de-b95f-e00e1502085b </b>err=null took=1.334481ms</span></div>
<div class="row" style="top:354px"><i></i><span class="d">2023-02-01 22:51:33.000</span><span class="s">catalogue</span><span class="m"><b class="p">ts=2023-02-01T22:51:33Z caller=logging.go:36 </b><b class="l" style="letter-spacing:-0.038px">method=List tags= order=id pageNum=1 pageSize=10 result=9 </b>err=null took=6.232993ms</span></div>
<div class="row" style="top:386px"><i></i><span class="d">2023-02-01 22:51:33.000</span><span class="s">catalogue</span><span class="m"><b class="p">ts=2023-02-01T22:51:33Z caller=logging.go:36 </b><b class="l" style="letter-spacing:-0.126px">method=List tags= order=id pageNum=1 pageSize=10 result=9 </b>err=null took=1.169326ms</span></div>
<div class="row" style="top:418px"><i></i><span class="d">2023-02-01 22:51:33.000</span><span class="s">catalogue</span><span class="m"><b class="p">ts=2023-02-01T22:51:33Z caller=logging.go:62 </b>method=Get <b class="u" style="letter-spacing:0.010px">id=819e1fbf-8b7e-4f6d-811f-693534916a8b sock=819e1fbf-8b7e-4f6d-811f-693534916a8b </b>err=null took=1.137281ms</span></div>
<div class="row" style="top:450px"><i></i><span class="d">2023-02-01 22:51:33.000</span><span class="s">catalogue</span><span class="m"><b class="p">ts=2023-02-01T22:51:33Z caller=logging.go:36 </b><b class="l" style="letter-spacing:-0.081px">method=List tags= order=id pageNum=1 pageSize=10 result=9 </b>err=null took=1.348589ms</span></div>
<div class="row" style="top:482px"><i></i><span class="d">2023-02-01 22:51:33.000</span><span class="s">catalogue</span><span class="m"><b class="p">ts=2023-02-01T22:51:33Z caller=logging.go:36 </b><b class="l" style="letter-spacing:-0.090px">method=List tags= order=id pageNum=1 pageSize=10 result=9 </b>err=null took=1.344050ms</span></div></div>
</div>
<svg class="abs" style="left:186px;top:518px" width="18" height="19" viewBox="0 0 18 19"><path d="M5.2 1.2c.9 0 1.4.6 1.4 1.5V8l.4-.1c.1-.8.6-1.1 1.2-1.1.7 0 1.1.4 1.2 1.1l.2.2c.2-.7.6-1 1.2-1 .7 0 1.1.5 1.2 1.2h.2c.2-.6.6-.8 1.1-.8.8 0 1.3.6 1.3 1.5v3.5c0 1.5-.4 2.6-1.1 3.6l-.4 1.8H7.4l-.5-1.6C5.6 15 3.9 12.6 2.4 10.7c-.5-.7-.4-1.5.2-1.9.6-.4 1.3-.2 1.8.4l.6.8V2.7c0-.9.4-1.5 1.2-1.5z" fill="#fff" stroke="#000" stroke-width="1.1" stroke-linejoin="round"/><path d="M8.6 12v3M10.6 12v3M12.6 12v3" stroke="#000" stroke-width=".9"/></svg>
<svg class="abs" style="left:1729px;top:49px" width="32" height="32" viewBox="-16 -16 32 32"><circle r="15" fill="#fff"/>
<g fill="#3ed47c"><path d="M-3.8-7.2l1 2.4 2.4 1-2.4 1-1 2.4-1-2.4-2.4-1 2.4-1z"/><path d="M3.8-7.2l1 2.4 2.4 1-2.4 1-1 2.4-1-2.4-2.4-1 2.4-1z"/><path d="M-3.8 .4l1 2.4 2.4 1-2.4 1-1 2.4-1-2.4-2.4-1 2.4-1z"/><path d="M3.8 .4l1 2.4 2.4 1-2.4 1-1 2.4-1-2.4-2.4-1 2.4-1z"/>
<path d="M-15 -1A15 15 0 0 1 -7 -13L-7.5 -8.5A9 9 0 0 0 -15 -1z"/><path d="M7 -13A15 15 0 0 1 14 -3L9 -5.5z"/><path d="M15 1A15 15 0 0 1 7 13L7.5 8.5z"/><path d="M-7 13A15 15 0 0 1 -14 3L-9 5.5z"/></g>
<path d="M0-8.5v17M-8.5 0h17" stroke="#c8f0d8" stroke-width=".8"/></svg>
</body></html>
